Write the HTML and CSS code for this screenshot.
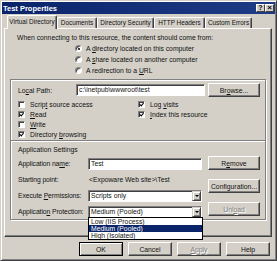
FILE: index.html
```html
<!DOCTYPE html>
<html lang="en">
<head>
    <meta charset="UTF-8">
    <title>Test Properties</title>
    <link rel="stylesheet" href="styles.css">
</head>
<body>
    <div class="dialog">
        <div class="titlebar">
            <span class="title">Test Properties</span>
            <span class="caption-btns">
                <span class="cbtn">?</span>
                <span class="cbtn cbtn-close">&#215;</span>
            </span>
        </div>
        <div class="tabs">
            <div class="tab tab-vd active">Virtual Directory</div>
            <div class="tab tab-doc">Documents</div>
            <div class="tab tab-sec">Directory Security</div>
            <div class="tab tab-http">HTTP Headers</div>
            <div class="tab tab-err">Custom Errors</div>
        </div>
        <div class="page">
            <div class="intro">When connecting to this resource, the content should come from:</div>
            <div class="radios">
                <div class="radio-row"><span class="radio checked"></span><span>A <u>d</u>irectory located on this computer</span></div>
                <div class="radio-row"><span class="radio"></span><span>A <u>s</u>hare located on another computer</span></div>
                <div class="radio-row"><span class="radio"></span><span>A redirection to a <u>U</u>RL</span></div>
            </div>
            <div class="frame">
                <div class="path-row">
                    <span class="path-label">Lo<u>c</u>al Path:</span>
                    <span class="edit path-edit">c:\inetpub\wwwroot\test</span>
                    <span class="btn browse-btn"><span>Br<u>o</u>wse...</span></span>
                </div>
                <div class="checks">
                    <div class="check-col">
                        <div class="check"><span class="box"></span><span>Scrip<u>t</u> source access</span></div>
                        <div class="check"><span class="box on"></span><span><u>R</u>ead</span></div>
                        <div class="check"><span class="box"></span><span><u>W</u>rite</span></div>
                        <div class="check"><span class="box on"></span><span>Directory <u>b</u>rowsing</span></div>
                    </div>
                    <div class="check-col">
                        <div class="check"><span class="box on"></span><span>Log <u>v</u>isits</span></div>
                        <div class="check"><span class="box on"></span><span><u>I</u>ndex this resource</span></div>
                    </div>
                </div>
                <div class="rule"></div>
                <div class="section-title">Application Settings</div>
                <div class="app">
                    <div class="app-fields">
                        <div class="app-row">
                            <span class="app-label">Application na<u>m</u>e:</span>
                            <span class="edit field">Test</span>
                        </div>
                        <div class="app-row">
                            <span class="app-label">Starting point:</span>
                            <span class="value">&lt;Expoware Web site&gt;\Test</span>
                        </div>
                        <div class="app-row">
                            <span class="app-label">Execute <u>P</u>ermissions:</span>
                            <span class="edit field combo">Scripts only<span class="drop"></span></span>
                        </div>
                        <div class="app-row">
                            <span class="app-label">Applicatio<u>n</u> Protection:</span>
                            <span class="edit field combo">Medium (Pooled)<span class="drop"></span></span>
                        </div>
                        <div class="droplist">
                            <div class="opt">Low (IIS Process)</div>
                            <div class="opt selected">Medium (Pooled)</div>
                            <div class="opt">High (Isolated)</div>
                        </div>
                    </div>
                    <div class="app-buttons">
                        <span class="btn"><span>R<u>e</u>move</span></span>
                        <span class="btn"><span>Confi<u>g</u>uration...</span></span>
                        <span class="btn disabled"><span>Unl<u>o</u>ad</span></span>
                    </div>
                </div>
            </div>
        </div>
        <div class="buttons">
            <span class="btn default">OK</span>
            <span class="btn">Cancel</span>
            <span class="btn disabled"><span><u>A</u>pply</span></span>
            <span class="btn">Help</span>
        </div>
    </div>
</body>
</html>
```

FILE: styles.css
```css
body {
    margin: 0;
    background-color: #d4d0c8;
    font-family: 'Liberation Sans', Arial, sans-serif;
    font-size: 6.8px;
    color: #111;
}
u {
    text-decoration-thickness: 1px;
}
.dialog {
    width: 277px;
    height: 261px;
    box-sizing: border-box;
    background-color: #d4d0c8;
    border: 1px solid;
    border-color: #d4d0c8 #404040 #404040 #d4d0c8;
    box-shadow: inset 1px 1px #fff, inset -1px -1px #808080;
    padding: 1px;
    display: flex;
    flex-direction: column;
}
.titlebar {
    height: 12px;
    flex-shrink: 0;
    display: flex;
    align-items: center;
    justify-content: space-between;
    padding: 0 1px;
    background: linear-gradient(90deg, #0a246a, #1e3c86);
    color: #fff;
    font-weight: bold;
    font-size: 7.5px;
}
.caption-btns {
    display: flex;
}
.cbtn {
    width: 9px;
    height: 8px;
    box-sizing: border-box;
    background-color: #d4d0c8;
    border: 1px solid;
    border-color: #fff #404040 #404040 #fff;
    color: #000;
    font-size: 7px;
    line-height: 6px;
    text-align: center;
}
.cbtn-close {
    font-size: 8px;
}
.tabs {
    display: flex;
    align-items: flex-end;
    height: 13px;
    flex-shrink: 0;
    margin: 1px 0 0 5px;
}
.tab {
    height: 11px;
    box-sizing: border-box;
    border: 1px solid;
    border-color: #fff #404040 transparent #fff;
    border-bottom: none;
    border-radius: 2px 2px 0 0;
    box-shadow: inset -1px 0 #808080;
    text-align: center;
    font-size: 6.4px;
    line-height: 10px;
    white-space: nowrap;
}
.tab.active {
    height: 14px;
    margin-bottom: -1px;
    position: relative;
    z-index: 1;
    background-color: #d4d0c8;
    line-height: 11px;
}
.tab-vd { width: 50px; }
.tab-doc { width: 40px; }
.tab-sec { width: 57px; }
.tab-http { width: 51px; }
.tab-err { width: 47px; }
.page {
    height: 209px;
    flex-shrink: 0;
    box-sizing: border-box;
    margin: 0 3px 0 2px;
    border: 1px solid;
    border-color: #fff #404040 #404040 #fff;
    box-shadow: inset -1px -1px #808080;
}
.intro {
    margin: 4px 0 0 12px;
    line-height: 9px;
}
.radios {
    margin: 1px 0 0 70px;
}
.radio-row {
    display: flex;
    align-items: center;
    height: 11px;
}
.radio {
    width: 7px;
    height: 7px;
    box-sizing: border-box;
    margin-right: 4px;
    border-radius: 50%;
    background-color: #fff;
    border: 1px solid;
    border-color: #808080 #fff #fff #808080;
    box-shadow: inset 1px 1px #404040;
    position: relative;
}
.radio.checked::after {
    content: "";
    position: absolute;
    left: 1.5px;
    top: 1.5px;
    width: 2px;
    height: 2px;
    border-radius: 50%;
    background-color: #000;
}
.frame {
    height: 141px;
    box-sizing: border-box;
    margin: 3px 5px 0 5px;
    padding: 3px 4px 0 7px;
    border: 1px solid #808080;
    box-shadow: inset 1px 1px #fff, 1px 1px #fff;
}
.path-row {
    display: flex;
    align-items: center;
    height: 14px;
}
.path-label {
    width: 58px;
}
.edit {
    height: 12px;
    box-sizing: border-box;
    background-color: #fff;
    border: 1px solid;
    border-color: #808080 #fff #fff #808080;
    box-shadow: inset 1px 1px #404040;
    padding-left: 2px;
    line-height: 10px;
    white-space: nowrap;
    overflow: hidden;
}
.path-edit {
    width: 129px;
    margin-right: 3px;
}
.btn {
    display: flex;
    align-items: center;
    justify-content: center;
    width: 52px;
    height: 14px;
    box-sizing: border-box;
    background-color: #d4d0c8;
    border: 1px solid;
    border-color: #fff #404040 #404040 #fff;
    box-shadow: inset -1px -1px #808080;
    white-space: nowrap;
}
.btn.disabled {
    color: #808080;
    text-shadow: 1px 1px #fff;
}
.btn.default {
    border-color: #000;
    box-shadow: inset 1px 1px #fff, inset -1px -1px #808080;
}
.checks {
    display: flex;
    margin-top: 2px;
}
.check-col {
    width: 120px;
}
.check {
    display: flex;
    align-items: center;
    height: 10px;
}
.box {
    width: 7px;
    height: 7px;
    box-sizing: border-box;
    margin-right: 5px;
    background-color: #fff;
    border: 1px solid;
    border-color: #808080 #fff #fff #808080;
    box-shadow: inset 1px 1px #404040;
    position: relative;
}
.box.on::after {
    content: "";
    position: absolute;
    left: 1px;
    top: 0;
    width: 2px;
    height: 3px;
    border: solid #000;
    border-width: 0 1.2px 1.2px 0;
    transform: rotate(40deg);
}
.rule {
    margin: 1px -4px 0 -7px;
    border-top: 1px solid #808080;
    border-bottom: 1px solid #fff;
}
.section-title {
    margin-top: 3px;
    line-height: 9px;
    height: 11px;
}
.app {
    display: flex;
}
.app-fields {
    position: relative;
    width: 184px;
    padding-top: 1px;
}
.app-row {
    display: flex;
    align-items: center;
    height: 13px;
    margin-bottom: 3px;
}
.app-label {
    width: 70px;
    white-space: nowrap;
    letter-spacing: -0.1px;
}
.field {
    width: 114px;
}
.value {
    padding-left: 1px;
    white-space: nowrap;
}
.combo {
    position: relative;
}
.drop {
    position: absolute;
    right: 0;
    top: 0;
    width: 9px;
    height: 10px;
    box-sizing: border-box;
    background-color: #d4d0c8;
    border: 1px solid;
    border-color: #d4d0c8 #404040 #404040 #d4d0c8;
    box-shadow: inset 1px 1px #fff, inset -1px -1px #808080;
}
.drop::after {
    content: "";
    position: absolute;
    left: 2px;
    top: 3px;
    border-left: 2px solid transparent;
    border-right: 2px solid transparent;
    border-top: 2px solid #000;
}
.droplist {
    position: absolute;
    left: 70px;
    top: 61px;
    width: 115px;
    box-sizing: border-box;
    background-color: #fff;
    border: 1px solid #000;
    z-index: 2;
}
.opt {
    height: 7px;
    line-height: 7px;
    padding-left: 2px;
    white-space: nowrap;
}
.opt.selected {
    background-color: #0a246a;
    color: #fff;
}
.app-buttons {
    margin-left: 6px;
    display: flex;
    flex-direction: column;
    gap: 9px;
}
.buttons {
    display: flex;
    justify-content: flex-end;
    gap: 5px;
    margin-top: 5px;
    padding-right: 5px;
}
.buttons .btn {
    width: 44px;
}
```
